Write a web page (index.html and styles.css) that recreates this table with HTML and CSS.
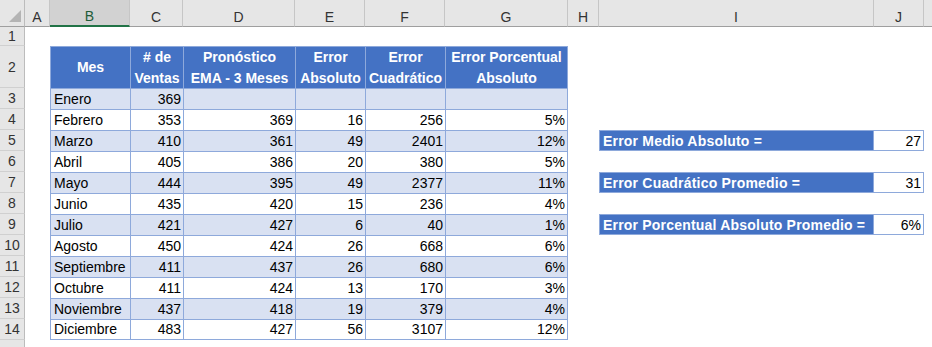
FILE: index.html
```html
<!DOCTYPE html>
<html lang="es">
<head>
<meta charset="utf-8">
<title>Error de pronóstico</title>
<link rel="stylesheet" href="styles.css">
</head>
<body>
<div class="sheet">
  <!-- column header row -->
  <div class="ch corner"><span class="tri"></span></div>
  <div class="ch">A</div>
  <div class="ch sel">B</div>
  <div class="ch">C</div>
  <div class="ch">D</div>
  <div class="ch">E</div>
  <div class="ch">F</div>
  <div class="ch">G</div>
  <div class="ch">H</div>
  <div class="ch">I</div>
  <div class="ch">J</div>
  <div class="ch end"></div>

  <!-- row 1 -->
  <div class="rh">1</div><div></div><div></div><div></div><div></div><div></div><div></div><div></div><div></div><div></div><div></div><div></div>

  <!-- row 2 -->
  <div class="rh bottom">2</div><div></div>
  <div class="t h">Mes</div>
  <div class="t h">#&nbsp;de<br>Ventas</div>
  <div class="t h">Pronóstico<br>EMA - 3 Meses</div>
  <div class="t h">Error<br>Absoluto</div>
  <div class="t h">Error<br>Cuadrático</div>
  <div class="t h g">Error Porcentual<br>Absoluto</div>
  <div></div><div></div><div></div><div></div>

  <!-- row 3 -->
  <div class="rh">3</div><div></div>
  <div class="t band">Enero</div><div class="t band n">369</div><div class="t band n"></div><div class="t band n"></div><div class="t band n"></div><div class="t band n g"></div>
  <div></div><div></div><div></div><div></div>

  <!-- row 4 -->
  <div class="rh">4</div><div></div>
  <div class="t">Febrero</div><div class="t n">353</div><div class="t n">369</div><div class="t n">16</div><div class="t n">256</div><div class="t n g">5%</div>
  <div></div><div></div><div></div><div></div>

  <!-- row 5 -->
  <div class="rh">5</div><div></div>
  <div class="t band">Marzo</div><div class="t band n">410</div><div class="t band n">361</div><div class="t band n">49</div><div class="t band n">2401</div><div class="t band n g">12%</div>
  <div></div><div class="box">Error Medio Absoluto =</div><div class="val">27</div><div></div>

  <!-- row 6 -->
  <div class="rh">6</div><div></div>
  <div class="t">Abril</div><div class="t n">405</div><div class="t n">386</div><div class="t n">20</div><div class="t n">380</div><div class="t n g">5%</div>
  <div></div><div></div><div></div><div></div>

  <!-- row 7 -->
  <div class="rh">7</div><div></div>
  <div class="t band">Mayo</div><div class="t band n">444</div><div class="t band n">395</div><div class="t band n">49</div><div class="t band n">2377</div><div class="t band n g">11%</div>
  <div></div><div class="box">Error Cuadrático Promedio =</div><div class="val">31</div><div></div>

  <!-- row 8 -->
  <div class="rh">8</div><div></div>
  <div class="t">Junio</div><div class="t n">435</div><div class="t n">420</div><div class="t n">15</div><div class="t n">236</div><div class="t n g">4%</div>
  <div></div><div></div><div></div><div></div>

  <!-- row 9 -->
  <div class="rh">9</div><div></div>
  <div class="t band">Julio</div><div class="t band n">421</div><div class="t band n">427</div><div class="t band n">6</div><div class="t band n">40</div><div class="t band n g">1%</div>
  <div></div><div class="box">Error Porcentual Absoluto Promedio =</div><div class="val">6%</div><div></div>

  <!-- row 10 -->
  <div class="rh">10</div><div></div>
  <div class="t">Agosto</div><div class="t n">450</div><div class="t n">424</div><div class="t n">26</div><div class="t n">668</div><div class="t n g">6%</div>
  <div></div><div></div><div></div><div></div>

  <!-- row 11 -->
  <div class="rh">11</div><div></div>
  <div class="t band">Septiembre</div><div class="t band n">411</div><div class="t band n">437</div><div class="t band n">26</div><div class="t band n">680</div><div class="t band n g">6%</div>
  <div></div><div></div><div></div><div></div>

  <!-- row 12 -->
  <div class="rh">12</div><div></div>
  <div class="t">Octubre</div><div class="t n">411</div><div class="t n">424</div><div class="t n">13</div><div class="t n">170</div><div class="t n g">3%</div>
  <div></div><div></div><div></div><div></div>

  <!-- row 13 -->
  <div class="rh">13</div><div></div>
  <div class="t band">Noviembre</div><div class="t band n">437</div><div class="t band n">418</div><div class="t band n">19</div><div class="t band n">379</div><div class="t band n g">4%</div>
  <div></div><div></div><div></div><div></div>

  <!-- row 14 -->
  <div class="rh">14</div><div></div>
  <div class="t last">Diciembre</div><div class="t n last">483</div><div class="t n last">427</div><div class="t n last">56</div><div class="t n last">3107</div><div class="t n g last">12%</div>
  <div></div><div></div><div></div><div></div>

  <!-- row 15 (partially visible) -->
  <div class="rh"></div><div></div><div></div><div></div><div></div><div></div><div></div><div></div><div></div><div></div><div></div><div></div>
</div>
</body>
</html>
```

FILE: styles.css
```css
* { box-sizing: border-box; }

body {
  margin: 0;
  background: #ffffff;
  color: #000000;
  font-family: "Liberation Sans", Arial, sans-serif;
  font-size: 14px;
}

.sheet {
  display: grid;
  grid-template-columns: 25px 25px 80px 53px 112px 70px 80px 123px 31px 275px 50px 8px;
  grid-template-rows: 27px 19px 42px repeat(13, 21px);
  width: 932px;
  height: 347px;
  overflow: hidden;
}

.sheet > div {
  white-space: nowrap;
  overflow: hidden;
}

/* column headers */
.ch {
  background: #e6e6e6;
  color: #333333;
  border-bottom: 1px solid #9f9f9f;
  border-right: 1px solid #c6c6c6;
  display: flex;
  align-items: center;
  justify-content: center;
  padding-top: 7px;
  font-size: 14px;
}
.ch.sel {
  background: #d2d2d2;
  color: #1e5c38;
  border-bottom: 2px solid #217346;
}
.ch.end { border-right: none; }

.corner {
  justify-content: flex-end;
  align-items: flex-end;
  padding: 0 3px 4px 0;
  border-right: 1px solid #bcbcbc;
}
.tri {
  width: 12px;
  height: 12px;
  background: #b4b4b4;
  clip-path: polygon(100% 0, 100% 100%, 0 100%);
}

/* row headers */
.rh {
  background: #e6e6e6;
  color: #333333;
  border-right: 1px solid #bcbcbc;
  border-bottom: 1px solid #d0d0d0;
  display: flex;
  align-items: center;
  justify-content: center;
  font-size: 14px;
}

/* table cells */
.t {
  border-left: 1px solid #8ea9db;
  border-top: 1px solid #8ea9db;
  display: flex;
  align-items: center;
  padding: 0 3px;
  line-height: 21px;
}
.t.band { background: #d9e1f2; }
.t.n { justify-content: flex-end; padding: 0 2px 0 3px; }
.t.g { border-right: 1px solid #8ea9db; }
.t.last { border-bottom: 1px solid #8ea9db; }

.t.h {
  background: #4472c4;
  color: #ffffff;
  font-weight: bold;
  justify-content: center;
  text-align: center;
  line-height: 21px;
  padding: 0;
}

/* summary boxes */
.box {
  background: #4472c4;
  color: #ffffff;
  font-weight: bold;
  border: 1px solid #8ea9db;
  display: flex;
  align-items: center;
  padding: 0 3px;
  letter-spacing: 0.2px;
}
.val {
  border: 1px solid #8ea9db;
  border-left: none;
  display: flex;
  align-items: center;
  justify-content: flex-end;
  padding: 0 2px;
}
```
